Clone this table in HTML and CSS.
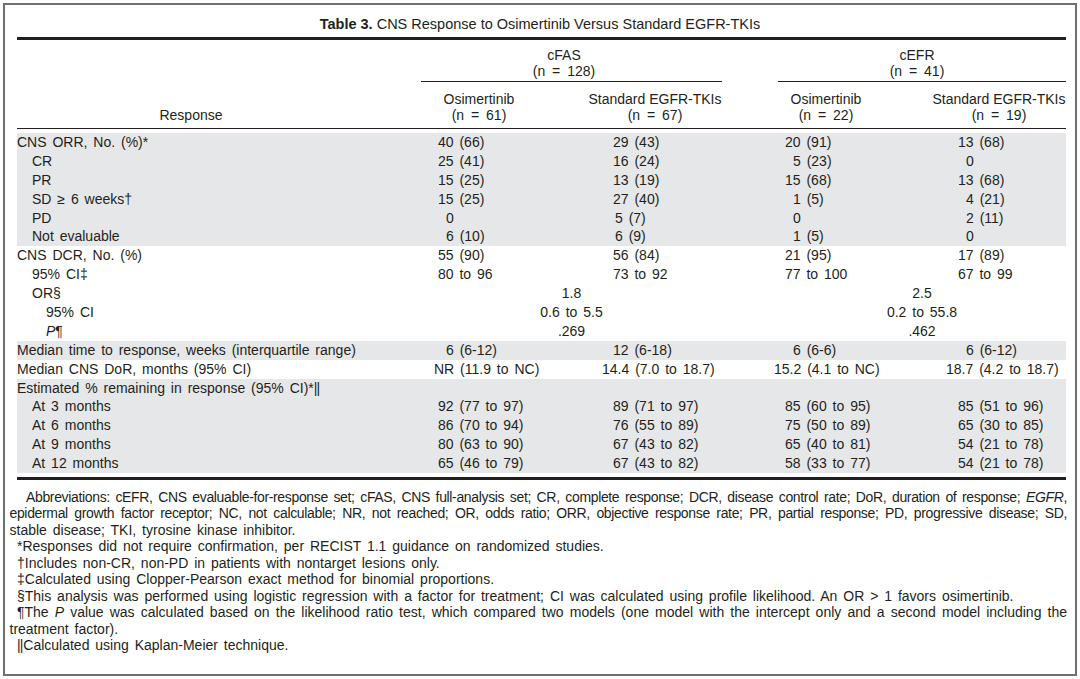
FILE: index.html
```html
<!DOCTYPE html>
<html lang="en">
<head>
<meta charset="utf-8">
<title>Table 3</title>
<link rel="stylesheet" href="styles.css">
</head>
<body>
<div class="frame">
  <div class="title"><b class="tno">Table 3.</b> CNS Response to Osimertinib Versus Standard EGFR-TKIs</div>
  <div class="tbl">
    <div class="head">
      <div class="h-resp">Response</div>
      <div class="h-grp g1"><span>cFAS</span><span class="n">(n = 128)</span></div>
      <div class="h-grp g2"><span>cEFR</span><span class="n">(n = 41)</span></div>
      <div class="h-col hc1"><span>Osimertinib</span><span class="n">(n = 61)</span></div>
      <div class="h-col hc2"><span>Standard EGFR-TKIs</span><span class="n">(n = 67)</span></div>
      <div class="h-col hc3"><span>Osimertinib</span><span class="n">(n = 22)</span></div>
      <div class="h-col hc4"><span>Standard EGFR-TKIs</span><span class="n">(n = 19)</span></div>
    </div>
    <div class="body">
      <div class="row sh"><div class="lb">CNS ORR, No. (%)*</div><div class="v1">40 (66)</div><div class="v2">29 (43)</div><div class="v3">20 (91)</div><div class="v4">13 (68)</div></div>
      <div class="row sh"><div class="lb l1">CR</div><div class="v1">25 (41)</div><div class="v2">16 (24)</div><div class="v3 p">5 (23)</div><div class="v4 p">0</div></div>
      <div class="row sh"><div class="lb l1">PR</div><div class="v1">15 (25)</div><div class="v2">13 (19)</div><div class="v3">15 (68)</div><div class="v4">13 (68)</div></div>
      <div class="row sh"><div class="lb l1">SD ≥ 6 weeks†</div><div class="v1">15 (25)</div><div class="v2">27 (40)</div><div class="v3 p">1 (5)</div><div class="v4 p">4 (21)</div></div>
      <div class="row sh"><div class="lb l1">PD</div><div class="v1 p">0</div><div class="v2 q">5 (7)</div><div class="v3 p">0</div><div class="v4 p">2 (11)</div></div>
      <div class="row sh"><div class="lb l1">Not evaluable</div><div class="v1 p">6 (10)</div><div class="v2 q">6 (9)</div><div class="v3 p">1 (5)</div><div class="v4 p">0</div></div>
      <div class="row"><div class="lb">CNS DCR, No. (%)</div><div class="v1">55 (90)</div><div class="v2">56 (84)</div><div class="v3">21 (95)</div><div class="v4">17 (89)</div></div>
      <div class="row"><div class="lb l1">95% CI‡</div><div class="v1">80 to 96</div><div class="v2">73 to 92</div><div class="v3">77 to 100</div><div class="v4">67 to 99</div></div>
      <div class="row"><div class="lb l1">OR§</div><div class="s1">1.8</div><div class="s2">2.5</div></div>
      <div class="row"><div class="lb l2">95% CI</div><div class="s1">0.6 to 5.5</div><div class="s2">0.2 to 55.8</div></div>
      <div class="row"><div class="lb l2"><i>P</i>¶</div><div class="s1">.269</div><div class="s2">.462</div></div>
      <div class="row sh"><div class="lb">Median time to response, weeks (interquartile range)</div><div class="v1 p">6 (6-12)</div><div class="v2">12 (6-18)</div><div class="v3 p">6 (6-6)</div><div class="v4 p">6 (6-12)</div></div>
      <div class="row"><div class="lb">Median CNS DoR, months (95% CI)</div><div class="v1 w">NR (11.9 to NC)</div><div class="v2 w">14.4 (7.0 to 18.7)</div><div class="v3 w">15.2 (4.1 to NC)</div><div class="v4 w">18.7 (4.2 to 18.7)</div></div>
      <div class="row sh"><div class="lb">Estimated % remaining in response (95% CI)*<span class="bars">||</span></div></div>
      <div class="row sh"><div class="lb l1">At 3 months</div><div class="v1">92 (77 to 97)</div><div class="v2">89 (71 to 97)</div><div class="v3">85 (60 to 95)</div><div class="v4">85 (51 to 96)</div></div>
      <div class="row sh"><div class="lb l1">At 6 months</div><div class="v1">86 (70 to 94)</div><div class="v2">76 (55 to 89)</div><div class="v3">75 (50 to 89)</div><div class="v4">65 (30 to 85)</div></div>
      <div class="row sh"><div class="lb l1">At 9 months</div><div class="v1">80 (63 to 90)</div><div class="v2">67 (43 to 82)</div><div class="v3">65 (40 to 81)</div><div class="v4">54 (21 to 78)</div></div>
      <div class="row sh"><div class="lb l1">At 12 months</div><div class="v1">65 (46 to 79)</div><div class="v2">67 (43 to 82)</div><div class="v3">58 (33 to 77)</div><div class="v4">54 (21 to 78)</div></div>
    </div>
  </div>
  <div class="notes">
    <div class="ln j ab i1">Abbreviations: cEFR, CNS evaluable-for-response set; cFAS, CNS full-analysis set; CR, complete response; DCR, disease control rate; DoR, duration of response; <i>EGFR</i>,</div>
    <div class="ln j ab">epidermal growth factor receptor; NC, not calculable; NR, not reached; OR, odds ratio; ORR, objective response rate; PR, partial response; PD, progressive disease; SD,</div>
    <div class="ln nw">stable disease; TKI, tyrosine kinase inhibitor.</div>
    <div class="ln nw i2">*Responses did not require confirmation, per RECIST 1.1 guidance on randomized studies.</div>
    <div class="ln nw i2">†Includes non-CR, non-PD in patients with nontarget lesions only.</div>
    <div class="ln nw i2">‡Calculated using Clopper-Pearson exact method for binomial proportions.</div>
    <div class="ln nw i2">§This analysis was performed using logistic regression with a factor for treatment; CI was calculated using profile likelihood. An OR &gt; 1 favors osimertinib.</div>
    <div class="ln j i2">¶The <i>P</i> value was calculated based on the likelihood ratio test, which compared two models (one model with the intercept only and a second model including the</div>
    <div class="ln nw">treatment factor).</div>
    <div class="ln nw i2"><span class="bars">||</span>Calculated using Kaplan-Meier technique.</div>
  </div>
</div>
</body>
</html>
```

FILE: styles.css
```css
html, body {
  margin: 0;
  background: #ffffff;
}

body {
  font-family: "Liberation Sans", Arial, sans-serif;
  font-size: 14px;
  color: #231f20;
  word-spacing: 2px;
  --cols: 404px 116px 185px 56px 96px 192px;
}

.frame {
  box-sizing: border-box;
  height: 673px;
  margin: 3px 3px 0;
  border: 2px solid #707070;
}

.title {
  margin-top: 11px;
  line-height: 16px;
  text-align: center;
  font-size: 14.5px;
  word-spacing: 0;
}

.tno {
  font-family: "Liberation Sans Narrow", "Liberation Sans", Arial, sans-serif;
  font-stretch: condensed;
  font-weight: bold;
}

.tbl {
  margin: 5px 0 0 12px;
  width: 1049px;
  border-top: 3px solid #231f20;
  border-bottom: 3px solid #231f20;
  padding-bottom: 4px;
}

.head {
  display: grid;
  grid-template-columns: var(--cols);
  line-height: 16px;
  border-bottom: 1px solid #231f20;
  word-spacing: 0;
}

.h-resp {
  grid-column: 1;
  grid-row: 1 / 3;
  align-self: end;
  text-align: center;
  padding: 0 56px 5px 0;
}

.h-grp {
  grid-row: 1;
  display: flex;
  flex-direction: column;
  align-items: center;
  padding: 7px 0 2px;
  border-bottom: 1px solid #231f20;
  white-space: nowrap;
}

.g1 { grid-column: 2 / 4; padding-right: 15px; }
.g2 { grid-column: 5 / 7; padding-right: 10px; }

.h-col {
  grid-row: 2;
  display: flex;
  flex-direction: column;
  align-items: center;
  padding: 9px 0 5px;
  white-space: nowrap;
}

.hc1 { grid-column: 2; }
.hc2 { grid-column: 3; padding-left: 51px; }
.hc3 { grid-column: 5; }
.hc4 { grid-column: 6; padding-left: 58px; }

.n { word-spacing: 3px; }

.body {
  margin-top: 4px;
}

.row {
  display: grid;
  grid-template-columns: var(--cols);
  height: 18.9px;
  line-height: 18.9px;
  white-space: nowrap;
}

.sh { background: #e6e7e8; }

.lb { grid-column: 1; }
.l1 { padding-left: 15px; }
.l2 { padding-left: 29px; }

.v1 { grid-column: 2; padding-left: 17px; }
.v2 { grid-column: 3; padding-left: 76px; }
.v3 { grid-column: 5; padding-left: 7px; }
.v4 { grid-column: 6; padding-left: 84px; }

.v1.p { padding-left: 25px; }
.v2.q { padding-left: 78px; }
.v3.p { padding-left: 15px; }
.v4.p { padding-left: 92px; }

.v1.w { padding-left: 13px; }
.v2.w { padding-left: 65px; }
.v3.w { padding-left: 0; margin-left: -4px; }
.v4.w { padding-left: 72px; }

.s1 { grid-column: 2 / 4; text-align: center; }
.s2 { grid-column: 5 / 7; text-align: center; }

.bars {
  letter-spacing: -1px;
  margin-right: 1px;
}

.notes {
  margin: 8.5px 0 0 4.5px;
  width: 1057.5px;
  line-height: 16.5px;
}

.nw { white-space: nowrap; }

.j {
  text-align: justify;
  text-align-last: justify;
  word-spacing: 0;
}

.ab { letter-spacing: -0.35px; }

.i1 { padding-left: 16.5px; }
.i2 { padding-left: 7.5px; }
```
